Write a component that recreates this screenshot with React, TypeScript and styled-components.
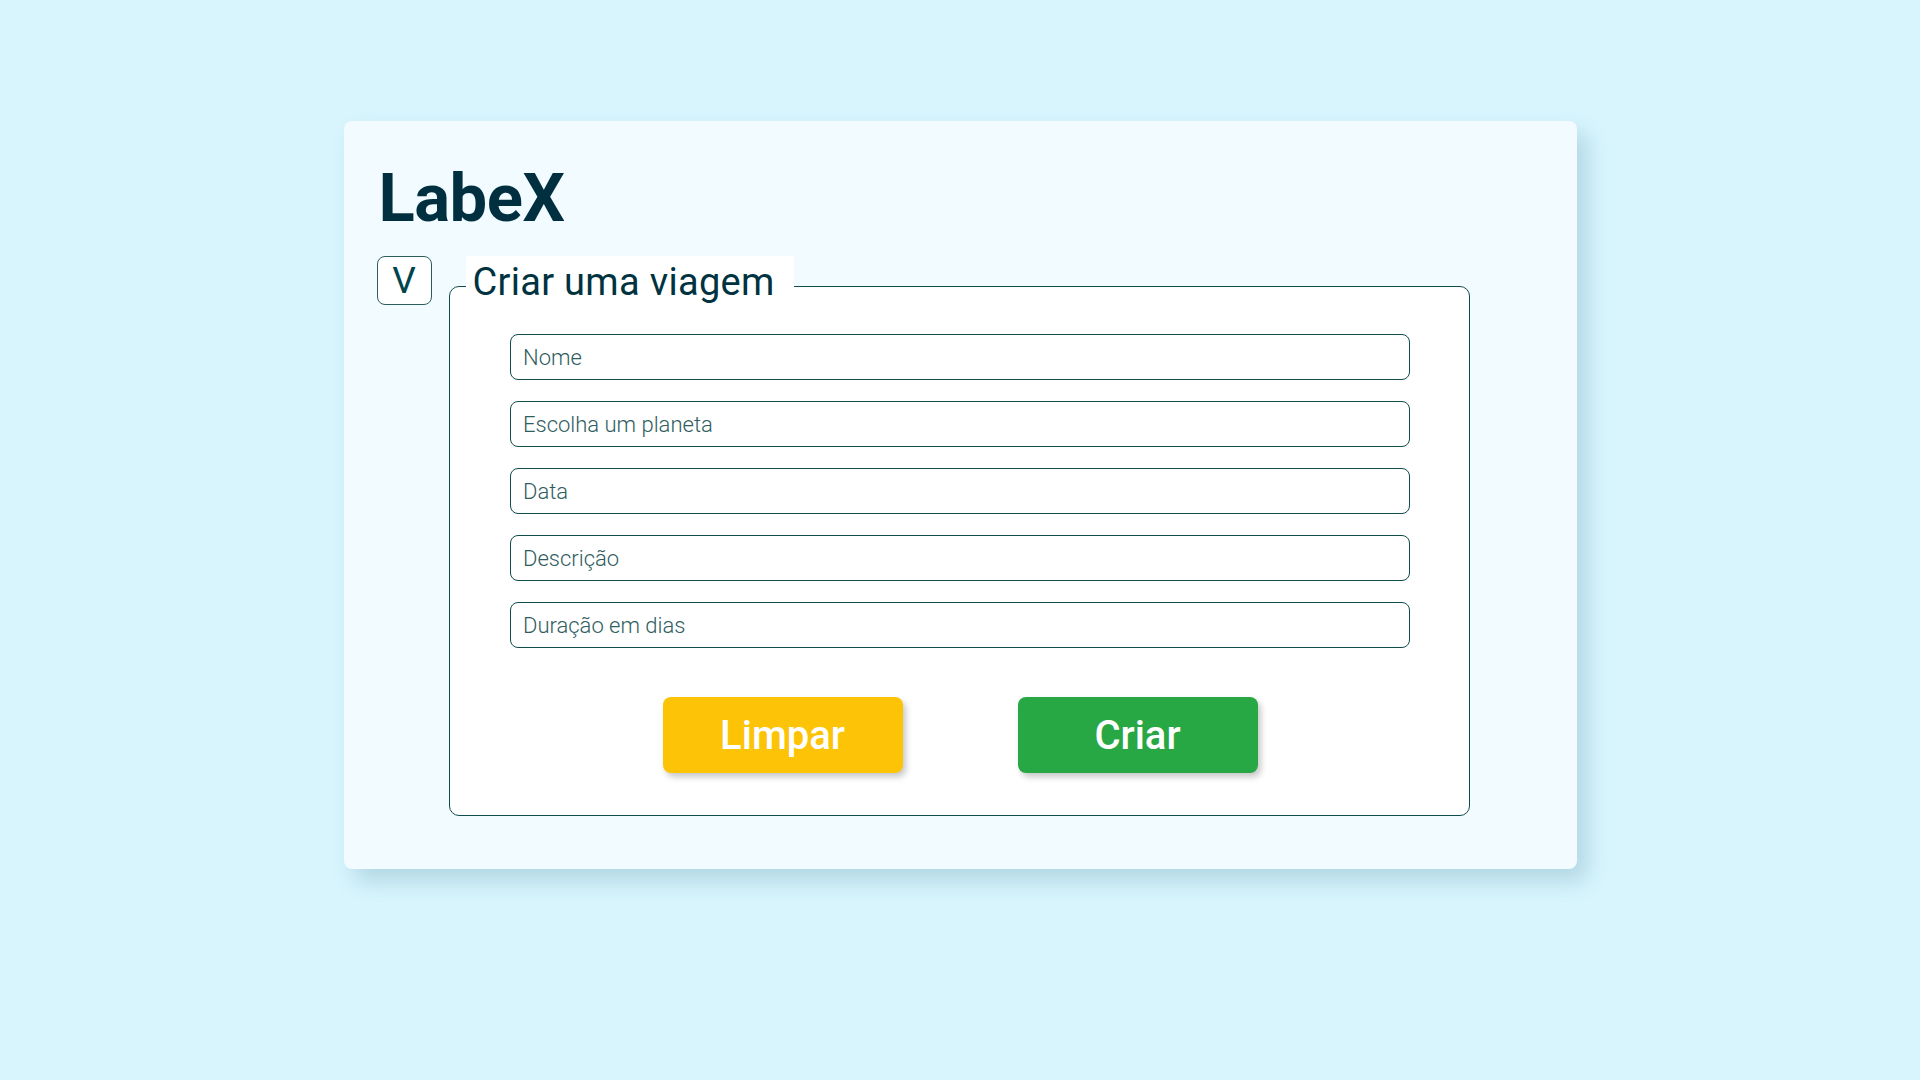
import React, { useState } from "react";
import styled, { createGlobalStyle } from "styled-components";

const GlobalStyle = createGlobalStyle`
  html, body {
    margin: 0;
    padding: 0;
    background: #d8f5fd;
    font-family: Roboto, "Liberation Sans", sans-serif;
  }
`;

const Page = styled.div`
  min-height: 1080px;
  padding-top: 121px;
  box-sizing: border-box;
`;

const Card = styled.main`
  width: 1233px;
  height: 748px;
  margin: 0 auto;
  box-sizing: border-box;
  padding: 44px 35px 0 33px;
  background: #f2fbff;
  border-radius: 8px;
  box-shadow: 10px 12px 22px rgba(40, 110, 140, 0.22);
`;

const Title = styled.h1`
  margin: 0 0 24px 2px;
  font-size: 67px;
  line-height: 1;
  font-weight: 700;
  color: #00303f;
  letter-spacing: -0.5px;
`;

const Row = styled.div`
  display: flex;
  align-items: flex-start;
  gap: 17px;
`;

const ToggleButton = styled.button`
  width: 55px;
  height: 49px;
  flex: none;
  border: 1px solid #2b5d5d;
  border-radius: 8px;
  background: #ffffff;
  color: #00454d;
  font-family: Roboto, sans-serif;
  font-size: 37px;
  font-weight: 400;
  line-height: 1;
  padding: 0;
  cursor: pointer;
`;

const FieldSet = styled.fieldset`
  width: 1021px;
  height: 560px;
  box-sizing: border-box;
  margin: 0;
  padding: 0 14px 0 16px;
  border: 1px solid #0f4c4c;
  border-radius: 10px;
  background: #ffffff;
`;

const Legend = styled.legend`
  padding: 0 19px 8px 7px;
  background: #ffffff;
  font-size: 38px;
  font-weight: 400;
  line-height: 52px;
  letter-spacing: 0.3px;
  color: #00333f;
`;

const Fields = styled.div`
  display: flex;
  flex-direction: column;
  gap: 21px;
  width: 900px;
  margin: 18px auto 0;
`;

const Input = styled.input`
  height: 46px;
  box-sizing: border-box;
  padding: 0 12px;
  border: 1px solid #0f4c4c;
  border-radius: 8px;
  background: #ffffff;
  font-family: Roboto, sans-serif;
  font-size: 22px;
  font-weight: 300;
  color: #234f52;
  outline: none;

  &::placeholder {
    color: #2f5d60;
  }
`;

const Actions = styled.div`
  display: flex;
  justify-content: center;
  gap: 115px;
  margin-top: 49px;
`;

const ActionButton = styled.button<{ $bg: string }>`
  width: 240px;
  height: 76px;
  border: none;
  border-radius: 8px;
  background: ${(p) => p.$bg};
  color: #ffffff;
  font-family: Roboto, sans-serif;
  font-size: 40px;
  font-weight: 500;
  box-shadow: 3px 4px 6px rgba(0, 0, 0, 0.22);
  cursor: pointer;
`;

const fields = ["Nome", "Escolha um planeta", "Data", "Descrição", "Duração em dias"];

export default function App() {
  const [values, setValues] = useState<string[]>(fields.map(() => ""));

  const update = (i: number, v: string) => {
    const next = [...values];
    next[i] = v;
    setValues(next);
  };

  return (
    <Page>
      <GlobalStyle />
      <Card>
        <Title>LabeX</Title>
        <Row>
          <ToggleButton>V</ToggleButton>
          <FieldSet>
            <Legend>Criar uma viagem</Legend>
            <Fields>
              {fields.map((f, i) => (
                <Input
                  key={f}
                  placeholder={f}
                  value={values[i]}
                  onChange={(e) => update(i, e.target.value)}
                />
              ))}
            </Fields>
            <Actions>
              <ActionButton $bg="#fdc307" onClick={() => setValues(fields.map(() => ""))}>
                Limpar
              </ActionButton>
              <ActionButton $bg="#28a745">Criar</ActionButton>
            </Actions>
          </FieldSet>
        </Row>
      </Card>
    </Page>
  );
}
